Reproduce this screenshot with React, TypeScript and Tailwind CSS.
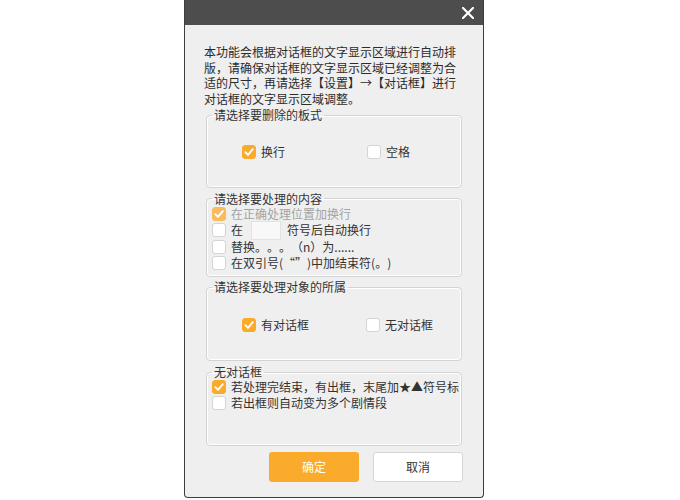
import React from "react";

const Check = ({ checked, disabled }: { checked?: boolean; disabled?: boolean }) => (
  <span
    className={
      "flex h-[14px] w-[14px] shrink-0 items-center justify-center rounded-[3px] border " +
      (checked
        ? disabled
          ? "border-[#f9bc5c] bg-[#f9bc5c]"
          : "border-[#fbab2b] bg-[#fbab2b]"
        : "border-[#d4d4d4] bg-white")
    }
  >
    {checked && (
      <svg width="12" height="12" viewBox="0 0 12 12" fill="none">
        <path d="M2.3 6.2 L5 8.9 L9.8 3.2" stroke="#fff" strokeWidth="1.9" strokeLinecap="round" strokeLinejoin="round" />
      </svg>
    )}
  </span>
);

const Option = ({
  label,
  checked,
  disabled,
  className = "",
}: {
  label: React.ReactNode;
  checked?: boolean;
  disabled?: boolean;
  className?: string;
}) => (
  <div className={"flex h-[16px] items-center gap-[5px] whitespace-nowrap " + className}>
    <Check checked={checked} disabled={disabled} />
    <span className={disabled ? "text-[#a3a3a3]" : "text-[#333]"}>{label}</span>
  </div>
);

const Group = ({
  title,
  className = "",
  children,
}: {
  title: string;
  className?: string;
  children: React.ReactNode;
}) => (
  <fieldset
    className={
      "rounded-[4px] border border-[#d3d3d3] shadow-[inset_0_0_0_1px_#fff] " + className
    }
  >
    <legend className="ml-[5px] px-[2px] leading-[14px] text-[#333]">{title}</legend>
    {children}
  </fieldset>
);

export default function App() {
  return (
    <div
      lang="zh-CN"
      className="h-[500px] w-[680px] bg-white text-[12px] [text-spacing-trim:space-all]"
      style={{ fontFamily: '"Noto Sans CJK SC", "Noto Sans", sans-serif' }}
    >
      <div className="ml-[184px] flex h-[498px] w-[300px] flex-col overflow-hidden rounded-b-[4px] border-x border-b border-[#3d3d3d] bg-[#efefef]">
        <div className="flex h-[25px] shrink-0 items-center justify-end bg-[#4d4d4d] pr-[9px]">
          <svg width="12" height="12" viewBox="0 0 12 12">
            <path d="M1 1 L11 11 M11 1 L1 11" stroke="#fff" strokeWidth="2.2" strokeLinecap="square" />
          </svg>
        </div>

        <div className="flex flex-col px-[21px]">
          <p className="-ml-[2px] mt-[19px] whitespace-nowrap leading-[15.5px] text-[#2b2b2b]">
            本功能会根据对话框的文字显示区域进行自动排
            <br />
            版，请确保对话框的文字显示区域已经调整为合
            <br />
            适的尺寸，再请选择【设置】→【对话框】进行
            <br />
            对话框的文字显示区域调整。
          </p>

          <Group title="请选择要删除的板式" className="mt-[2px] pb-[27px] pt-[22px]">
            <div className="flex pl-[35px]">
              <Option label="换行" checked className="w-[125px]" />
              <Option label="空格" />
            </div>
          </Group>

          <Group title="请选择要处理的内容" className="mt-[3.5px] pb-[5px]">
            <div className="flex flex-col pl-[5px]">
              <Option label="在正确处理位置加换行" checked disabled />
              <div className="flex h-[17px] items-center gap-[5px] whitespace-nowrap text-[#333]">
                <Check />
                <span>在</span>
                <span className="ml-[3px] h-[19px] w-[30px] border border-[#e2e2e2] bg-[#f8f8f8]" />
                <span className="ml-[1px]">符号后自动换行</span>
              </div>
              <Option label="替换。。。（n）为......" />
              <Option label="在双引号(“”)中加结束符(。)" />
            </div>
          </Group>

          <Group title="请选择要处理对象的所属" className="mt-[3.5px] pb-[26.5px] pt-[23px]">
            <div className="flex pl-[35px]">
              <Option label="有对话框" checked className="w-[124px]" />
              <Option label="无对话框" />
            </div>
          </Group>

          <Group title="无对话框" className="mt-[4.5px] pb-[33.5px]">
            <div className="flex flex-col pl-[5px]">
              <Option label="若处理完结束，有出框，末尾加★▲符号标" checked />
              <Option label="若出框则自动变为多个剧情段" />
            </div>
          </Group>

          <div className="-mr-[1px] mt-[6px] flex justify-end gap-[14px]">
            <button className="h-[30px] w-[90px] rounded-[3px] bg-[#fbab2b] text-[12px] text-white">
              确定
            </button>
            <button className="h-[30px] w-[90px] rounded-[3px] border border-[#d6d6d6] bg-white text-[12px] text-[#333]">
              取消
            </button>
          </div>
        </div>
      </div>
    </div>
  );
}
